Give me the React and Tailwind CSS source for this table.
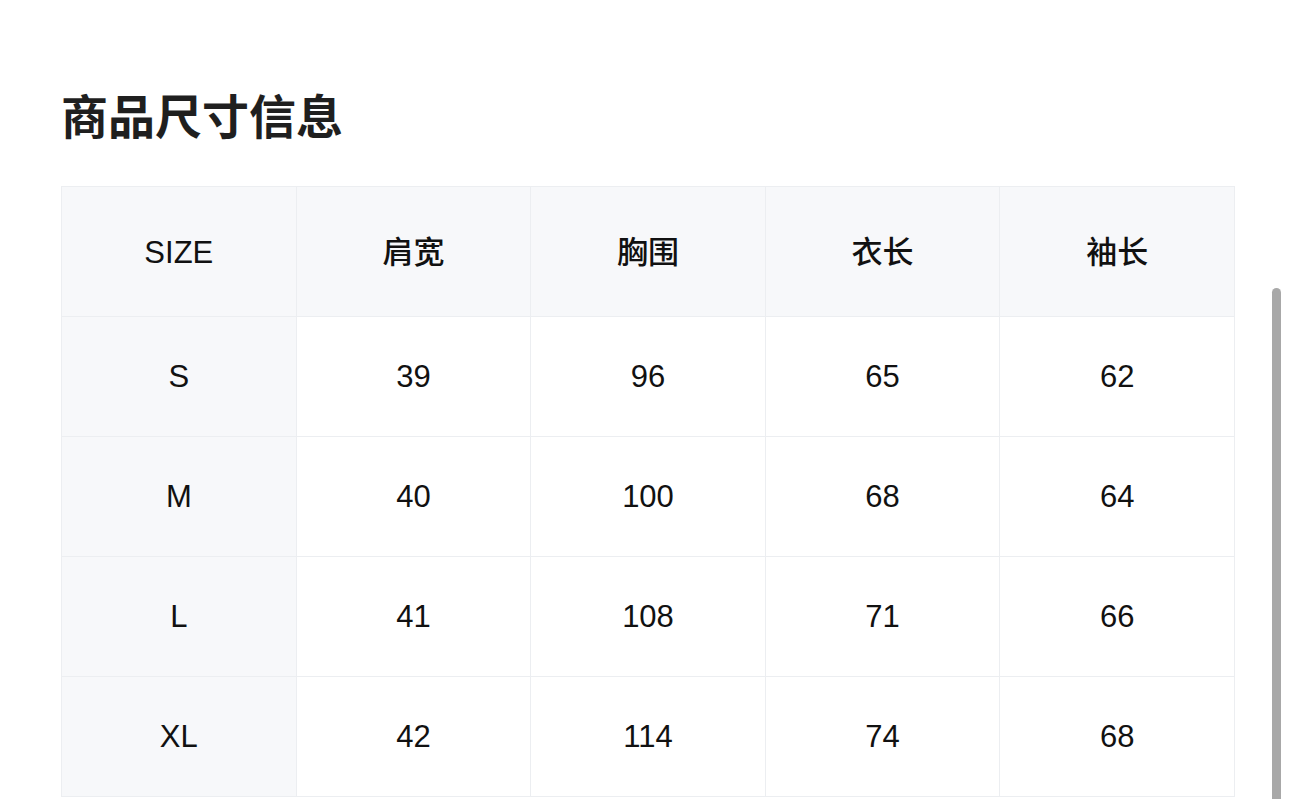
const headers = ["SIZE", "肩宽", "胸围", "衣长", "袖长"];
const rows = [
  ["S", "39", "96", "65", "62"],
  ["M", "40", "100", "68", "64"],
  ["L", "41", "108", "71", "66"],
  ["XL", "42", "114", "74", "68"],
];

const font = { fontFamily: '"Liberation Sans", "Noto Sans CJK SC", sans-serif' };

export default function App() {
  return (
    <div className="relative h-[799px] w-[1290px] overflow-hidden bg-white text-[#111]" style={font}>
      <div className="pl-[61px] pt-[88px]">
        <h1 className="h-[60px] text-[47px] font-semibold leading-[60px] text-[#1f1f1f]">商品尺寸信息</h1>
        <div className="mt-[38px] w-[1174px] border-t border-l border-[#eceef1]">
          <div className="grid h-[130px] grid-cols-5 bg-[#f7f8fa]">
            {headers.map((h) => (
              <div key={h} className="flex items-center justify-center border-r border-b border-[#eceef1] pt-[4px] text-[31px] font-medium">
                {h}
              </div>
            ))}
          </div>
          {rows.map((r) => (
            <div key={r[0]} className="grid h-[120px] grid-cols-5">
              {r.map((c, i) => (
                <div
                  key={i}
                  className={`flex items-center justify-center border-r border-b border-[#eceef1] pt-[2px] text-[31px] ${
                    i === 0 ? "bg-[#f7f8fa] font-medium" : "bg-white"
                  }`}
                >
                  {c}
                </div>
              ))}
            </div>
          ))}
        </div>
      </div>
      <div className="absolute top-[288px] left-[1272px] h-[520px] w-[9px] rounded-full bg-[#a8a8a8]" />
    </div>
  );
}
